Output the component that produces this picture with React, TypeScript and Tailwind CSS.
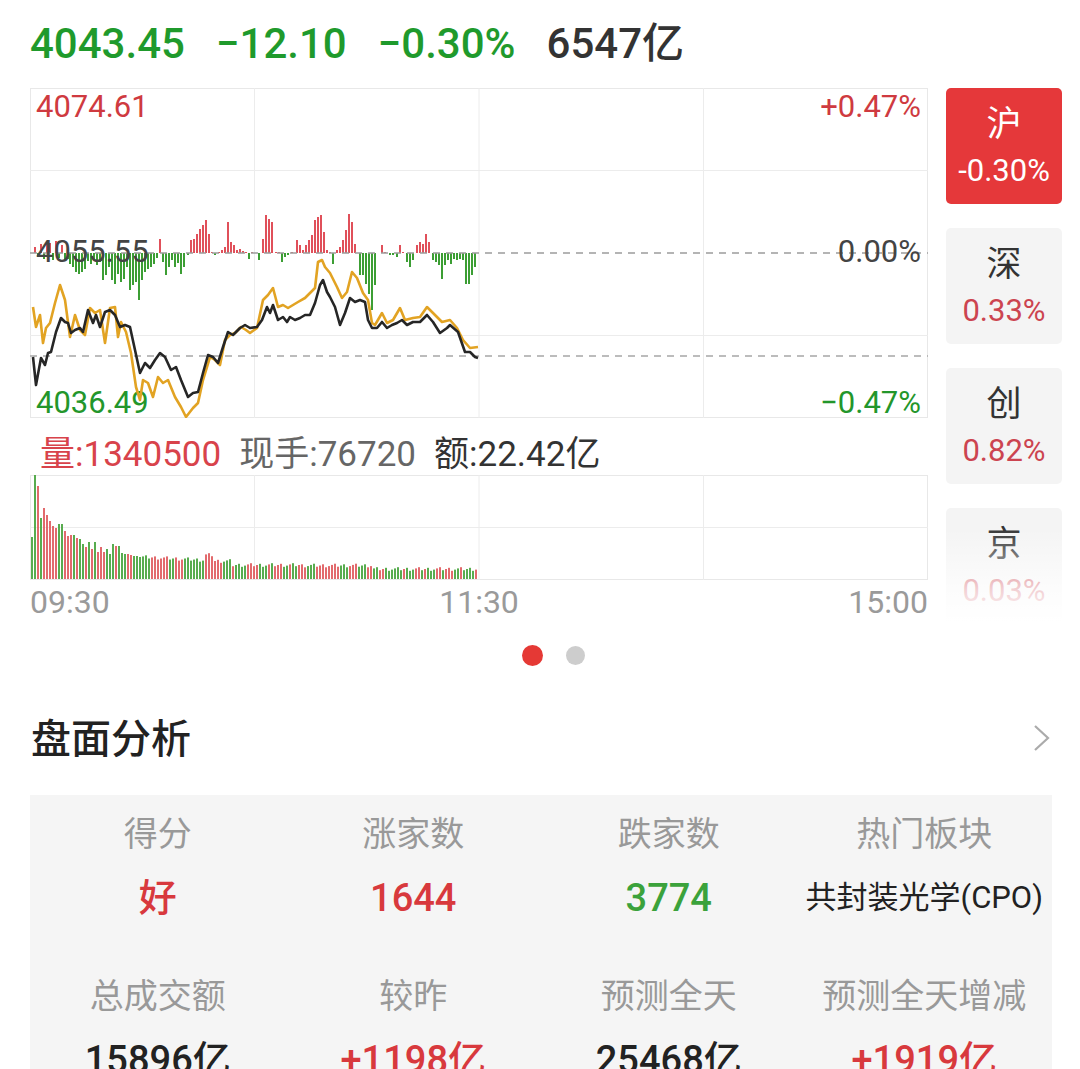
import React from "react";

// intraday price (dark) and average (orange) lines, screen coords
const pricePts =
  "33,357 36,385 41,358 45,365 48,353 51,352 56,332 61,318 65,322 68,323 71,333 75,330 80,328 83,332 88,310 93,323 96,315 100,327 105,312 110,310 115,315 120,327 125,325 130,327 135,350 140,373 145,363 150,368 155,360 160,353 165,357 171,370 176,367 181,380 188,397 193,393 198,392 203,373 208,355 213,357 218,363 223,347 228,332 233,335 240,328 245,325 250,328 257,327 262,320 267,307 270,313 273,305 278,320 283,317 287,322 290,317 295,320 300,318 305,315 310,315 315,303 320,285 323,280 327,292 330,297 335,307 340,325 345,313 350,298 355,302 360,300 365,302 368,320 372,328 377,328 382,322 387,328 392,325 397,323 402,320 407,325 413,322 420,322 427,315 433,322 440,333 447,328 450,325 458,332 465,352 470,352 475,357 478,358";
const avgPts =
  "33,307 36,327 40,315 43,343 46,328 50,323 55,303 60,285 65,300 70,337 75,315 80,330 85,335 90,308 95,313 100,310 105,343 110,308 115,307 118,337 121,322 126,332 131,353 136,387 140,400 143,380 148,383 153,397 158,377 163,383 168,380 175,397 181,407 186,417 193,408 198,403 203,380 210,357 215,360 220,365 225,340 230,335 235,333 241,327 246,330 250,333 257,328 263,300 268,295 273,288 278,307 283,305 288,308 293,305 298,302 305,298 310,293 315,288 318,262 322,260 325,267 330,273 337,287 342,298 347,292 352,272 357,278 363,293 368,300 372,323 375,325 382,313 387,323 393,320 400,308 405,320 413,318 420,317 427,307 433,313 442,322 450,320 457,328 463,340 470,348 478,347";

// [x, height] — positive up (red), negative down (green)
const hist: [number, number][] = [
  [35, 6], [38, -4], [41, 9], [44, -6], [47, 11], [50, 10], [53, -7], [56, 12], [59, -5], [62, 8], [65, -8], [68, -6],
  [70, -11], [73, -14], [76, -19], [79, -21], [82, -19], [85, -16], [88, -8], [91, -11], [94, -7], [97, -12], [100, -9],
  [103, -27], [106, -22], [109, -14], [112, -27], [115, -31], [118, -21], [121, -29], [124, -26], [127, -14], [130, -37],
  [133, -32], [136, -29], [139, -47], [142, -27], [145, -19], [148, -16], [151, -14], [154, -11], [157, -5], [160, 14],
  [163, -9], [166, -22], [169, -14], [172, -7], [175, -14], [178, -10], [181, -21], [184, -14], [188, -2], [191, 13],
  [194, 14], [197, 19], [200, 24], [203, 28], [206, 33], [209, 19], [212, 1], [215, -2], [219, 1], [222, 3], [225, 6],
  [228, 31], [231, 11], [234, 8], [237, 3], [240, 4], [243, 2], [246, 1], [249, -6], [252, 1], [259, -7], [263, 14],
  [266, 38], [269, 34], [272, 31], [276, 1], [279, 1], [282, -9], [285, -4], [288, -2], [292, 1], [297, 13], [300, 8],
  [303, 3], [306, 8], [309, 13], [312, 18], [315, 33], [318, 36], [321, 38], [324, 21], [327, 3], [330, 1], [333, -11],
  [337, 3], [340, 6], [343, 13], [346, 23], [349, 39], [352, 31], [355, 9], [360, -22], [363, -22], [366, -31],
  [369, -41], [372, -57], [375, -32], [382, 8], [385, 1], [390, -2], [393, -2], [397, -4], [400, 8], [403, 1], [407, -9],
  [410, -14], [413, -7], [417, 8], [420, 11], [423, 9], [426, 19], [429, 11], [433, -7], [436, -9], [439, -12],
  [442, -26], [445, -12], [448, -7], [451, -11], [454, -6], [457, -7], [460, -6], [463, -7], [466, -31], [469, -31],
  [472, -22], [475, -14],
];

const volHead = [42, 105, 93, 61, 71, 64, 58, 53, 51, 55, 55, 48, 43, 44, 44, 41, 40, 35, 32, 37, 30, 37, 27, 32, 27, 30, 25, 35, 33, 33, 26, 25, 25, 24, 23, 23, 22];
const volColors =
  "ggrgrrrrrggrrrgrggrgrgrrrgggrgggrrggggggrrrrrrggrrrgggggggrrrrrrgggrggggrrrrgggrgrrrggrggrrrgggrrrrrrrrgggrrrgggrrggrrggggggrgggrrgrgggrrgrrrggrgg";
const vols = Array.from({ length: 149 }, (_, i) => {
  const x = 32 + i * 3;
  let h: number;
  if (i < volHead.length) h = volHead[i];
  else {
    const base = x < 205 ? 22 - (x - 143) * 0.05 : x < 232 ? 18 : x < 300 ? 14 : x < 372 ? 13.5 : 10;
    h = base + (((i * 37) % 7) - 3) * 0.6;
    if (x >= 206 && x <= 214) h += 6;
  }
  return { x, h, red: volColors[i % volColors.length] === "r" };
});

const tabs = [
  { name: "沪", pct: "-0.30%", active: true },
  { name: "深", pct: "0.33%" },
  { name: "创", pct: "0.82%" },
  { name: "京", pct: "0.03%" },
];

const stats = [
  { label: "得分", value: "好", color: "text-[#d8393d] text-[38px] font-medium" },
  { label: "涨家数", value: "1644", color: "text-[#d8393d] text-[38px] font-medium" },
  { label: "跌家数", value: "3774", color: "text-[#3ba23b] text-[38px] font-medium" },
  { label: "热门板块", value: "共封装光学(CPO)", color: "text-[#222] text-[31px] font-normal" },
  { label: "总成交额", value: "15896亿", color: "text-[#222] text-[38px] font-medium" },
  { label: "较昨", value: "+1198亿", color: "text-[#d8393d] text-[38px] font-medium" },
  { label: "预测全天", value: "25468亿", color: "text-[#222] text-[38px] font-medium" },
  { label: "预测全天增减", value: "+1919亿", color: "text-[#d8393d] text-[38px] font-medium" },
];

function PriceChart() {
  return (
    <svg width={898} height={330} viewBox="30 88 898 330" className="block">
      <rect x={30.5} y={88.5} width={897} height={329} fill="none" stroke="#e8e8e8" />
      {[170.5, 335.5].map((y) => (
        <line key={y} x1={30} x2={928} y1={y} y2={y} stroke="#ececec" />
      ))}
      {[254.5, 479, 703.5].map((x) => (
        <line key={x} x1={x} x2={x} y1={88} y2={418} stroke="#ececec" />
      ))}
      {hist.map(([x, h]) => (
        <rect key={x} x={x - 1} width={2} y={h > 0 ? 253 - h : 253} height={Math.abs(h)} fill={h > 0 ? "#e0505a" : "#3c9e34"} />
      ))}
      <line x1={30} x2={928} y1={253} y2={253} stroke="#9c9c9c" strokeWidth={1.5} strokeDasharray="7 6" />
      <line x1={30} x2={928} y1={356} y2={356} stroke="#a6a6a6" strokeWidth={1.5} strokeDasharray="7 6" />
      <g fontSize={31} dominantBaseline="central">
        <text x={36} y={106} fill="#cf3a40">4074.61</text>
        <text x={921} y={106} fill="#cf3a40" textAnchor="end">+0.47%</text>
        <text x={36} y={251} fill="#444">4055.55</text>
        <text x={921} y={251} fill="#444" textAnchor="end">0.00%</text>
        <text x={36} y={402} fill="#23962b">4036.49</text>
        <text x={921} y={402} fill="#23962b" textAnchor="end">−0.47%</text>
      </g>
      <polyline points={avgPts} fill="none" stroke="#e2a323" strokeWidth={2.6} strokeLinejoin="round" />
      <polyline points={pricePts} fill="none" stroke="#262626" strokeWidth={2.6} strokeLinejoin="round" />
    </svg>
  );
}

function VolumeChart() {
  return (
    <svg width={898} height={105} viewBox="30 475 898 105" className="block">
      <rect x={30.5} y={475.5} width={897} height={104} fill="none" stroke="#e8e8e8" />
      <line x1={30} x2={928} y1={527.5} y2={527.5} stroke="#ececec" />
      {[254.5, 479, 703.5].map((x) => (
        <line key={x} x1={x} x2={x} y1={475} y2={580} stroke="#ececec" />
      ))}
      {vols.map((v) => (
        <rect key={v.x} x={v.x - 0.9} width={1.8} y={579 - v.h} height={v.h} fill={v.red ? "#df5a5e" : "#46a43c"} />
      ))}
    </svg>
  );
}

export default function App() {
  return (
    <div className="w-[1080px] bg-white font-[family-name:Roboto,'Noto_Sans_CJK_SC',sans-serif] overflow-hidden">
      {/* quote header */}
      <div className="h-[88px] flex items-center pl-[30px] gap-[31px] text-[42px] font-medium leading-none">
        <span className="text-[#1f9a2c]">4043.45</span>
        <span className="text-[#1f9a2c]">−12.10</span>
        <span className="text-[#1f9a2c]">−0.30%</span>
        <span className="text-[#333]">6547亿</span>
      </div>

      {/* chart + index tabs */}
      <div className="flex pl-[30px]">
        <div className="w-[898px]">
          <PriceChart />
          <div className="h-[57px] flex items-end pb-[1px] pl-[10px] gap-[18px] text-[35px] leading-[38px]">
            <span className="text-[#d8434b]">量:1340500</span>
            <span className="text-[#666]">现手:76720</span>
            <span className="text-[#333]">额:22.42亿</span>
          </div>
          <VolumeChart />
          <div className="h-[43px] flex justify-between items-center text-[32px] text-[#9a9a9a] leading-none">
            <span>09:30</span>
            <span>11:30</span>
            <span>15:00</span>
          </div>
        </div>
        <div className="relative ml-[18px] w-[116px] h-[535px] overflow-hidden flex flex-col gap-[24px]">
          {tabs.map((t) => (
            <div
              key={t.name}
              className={`h-[116px] shrink-0 rounded-[5px] flex flex-col items-center pt-[14px] ${t.active ? "bg-[#e5383a]" : "bg-[#f4f4f4]"}`}
            >
              <span className={`text-[35px] leading-[46px] ${t.active ? "text-white" : "text-[#333]"}`}>{t.name}</span>
              <span className={`text-[31px] leading-[46px] ${t.active ? "text-white" : "text-[#cc4450]"}`}>{t.pct}</span>
            </div>
          ))}
          <div className="absolute inset-x-0 bottom-0 h-[112px] bg-linear-to-b from-white/0 from-15% via-white/75 via-70% to-white" />
        </div>
      </div>

      {/* pager dots */}
      <div className="h-[64px] flex items-center justify-center pl-[27px] gap-[23px]">
        <span className="w-[21px] h-[21px] rounded-full bg-[#e53935]" />
        <span className="w-[19px] h-[19px] rounded-full bg-[#cdcdcd]" />
      </div>

      {/* section title */}
      <div className="flex items-center justify-between pl-[31px] pr-[29px] pt-[28px]">
        <h2 className="text-[40px] leading-[50px] font-medium text-[#222]">盘面分析</h2>
        <svg width={18} height={28} viewBox="0 0 18 28" className="-mt-[4px]">
          <polyline points="2,2 15,14 2,26" fill="none" stroke="#ababab" strokeWidth={2.2} />
        </svg>
      </div>

      <div className="mt-[30px] ml-[30px] w-[1022px] bg-[#f5f5f5] grid grid-cols-4 gap-y-[52px] pt-[17px] pb-[30px]">
        {stats.map((s) => (
          <div key={s.label} className="flex flex-col items-center">
            <span className="h-[44px] text-[34px] leading-[44px] text-[#999]">{s.label}</span>
            <span className={`mt-[18px] h-[48px] flex items-center leading-[48px] whitespace-nowrap ${s.color}`}>
              {s.value}
            </span>
          </div>
        ))}
      </div>
    </div>
  );
}
